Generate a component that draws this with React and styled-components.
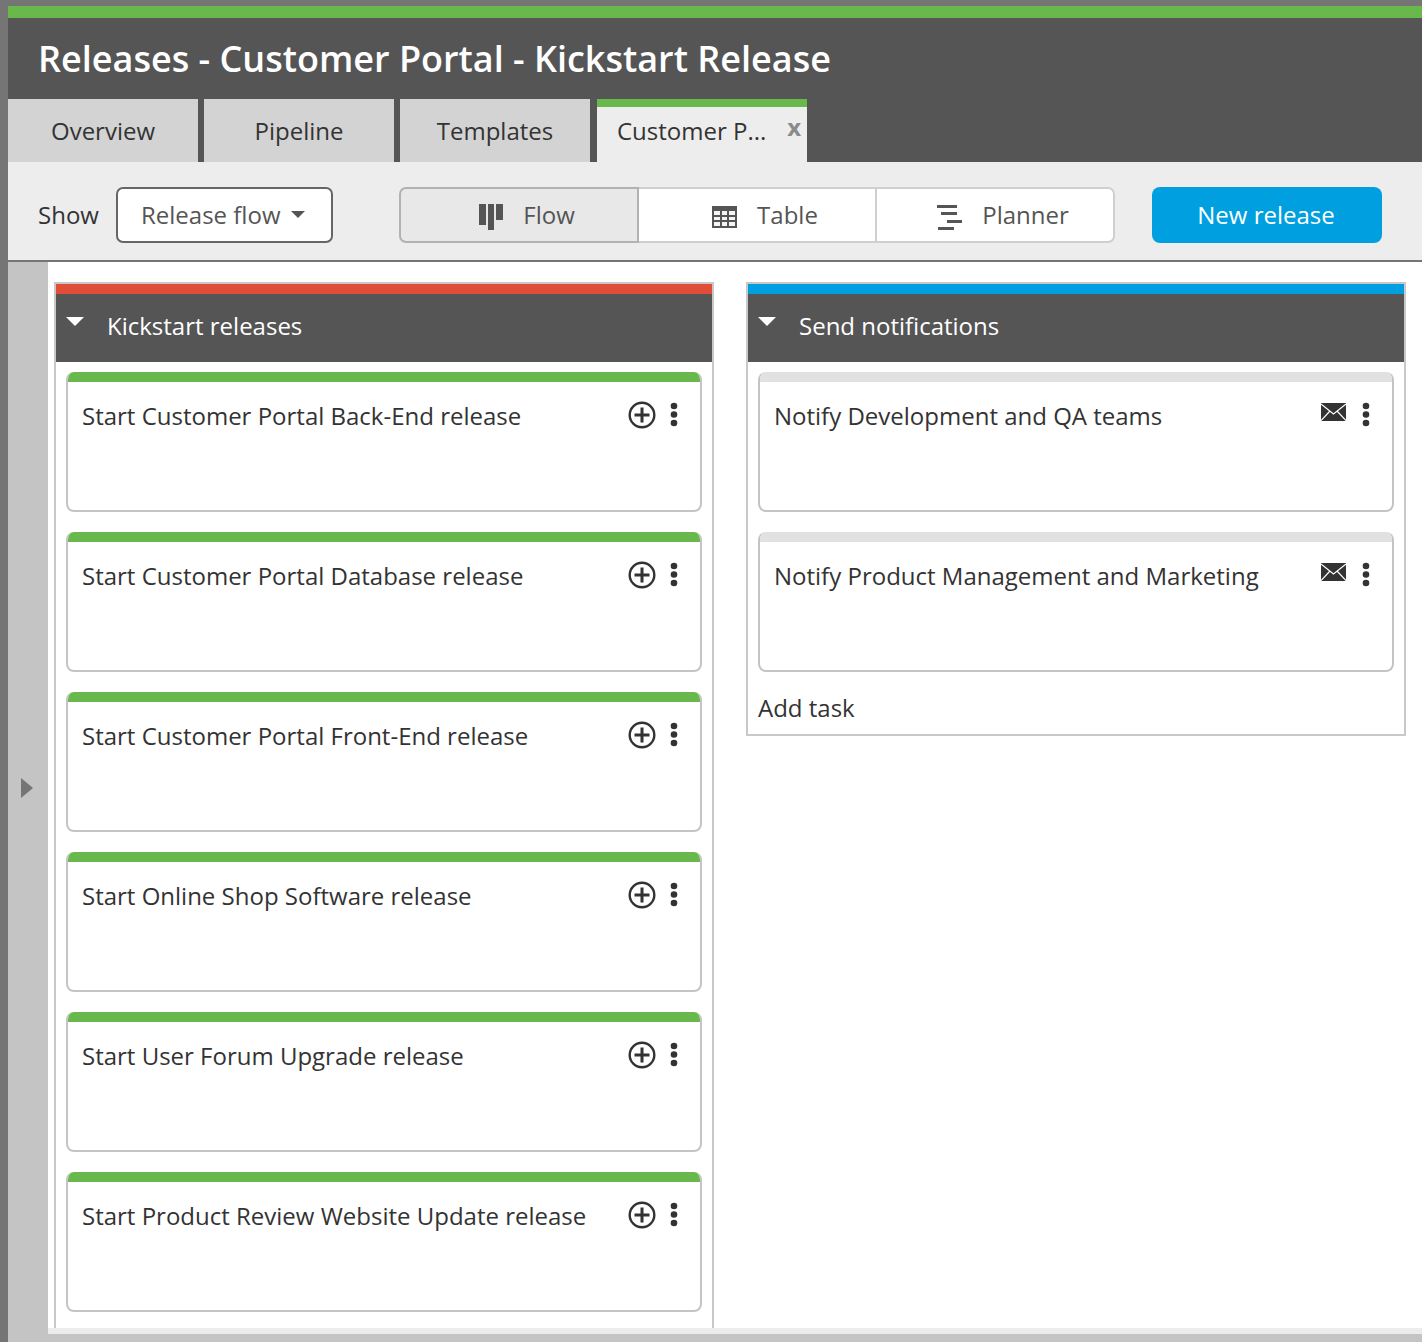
import React from "react";
import styled, { createGlobalStyle } from "styled-components";

const GlobalStyle = createGlobalStyle`
    html, body {
        margin: 0;
        height: 100%;
        overflow: hidden;
        background: #757575;
    }
    * {
        box-sizing: border-box;
    }
`

const Frame = styled.div`
    height: 1342px;
    padding: 6px 0 0 8px;
    display: flex;
    flex-direction: column;
    font-family: "Open Sans", "Liberation Sans", sans-serif;
    font-size: 24px;
    color: #333;
`

const Header = styled.header`
    flex: none;
    height: 156px;
    border-top: 12px solid #69b84b;
    background: #555;
    display: flex;
    flex-direction: column;
    justify-content: space-between;
`

const Title = styled.h1`
    margin: 0;
    padding: 15px 0 0 30px;
    font-size: 36px;
    line-height: 52px;
    font-weight: 600;
    color: #fff;
    white-space: nowrap;
`

const Tabs = styled.nav`
    display: flex;
    gap: 6px;
`

const Tab = styled.div`
    width: ${props => props.$active ? "210px" : "190px"};
    height: 63px;
    margin-left: ${props => props.$active ? "1px" : "0"};
    padding: ${props => props.$active ? "0 0 0 20px" : "0"};
    border-top: ${props => props.$active ? "8px solid #69b84b" : "0"};
    background: ${props => props.$active ? "#ededed" : "#d3d3d3"};
    display: flex;
    align-items: center;
    justify-content: ${props => props.$active ? "flex-start" : "center"};
    position: relative;
    line-height: 1;
`

const TabLabel = styled.span`
    position: relative;
    top: ${props => props.$active ? "-4px" : "0"};
`

const CloseTab = styled.span`
    position: absolute;
    top: 8px;
    right: 6px;
    font-size: 24px;
    font-weight: 700;
    color: #8a8a8a;
`

const Toolbar = styled.div`
    flex: none;
    height: 100px;
    padding: 25px 40px 0 30px;
    background: #ededed;
    border-bottom: 2px solid #757575;
    display: flex;
    align-items: flex-start;
`

const ShowLabel = styled.span`
    flex: none;
    width: 62px;
    line-height: 56px;
    margin-right: 16px;
`

const Select = styled.div`
    flex: none;
    width: 217px;
    height: 56px;
    margin-right: 66px;
    padding: 0 0 2px 23px;
    border: 2px solid #666;
    border-radius: 7px;
    background: #fff;
    color: #555;
    display: flex;
    align-items: center;
    gap: 11px;
`

const Caret = styled.span`
    width: 0;
    height: 0;
    border-left: 7px solid transparent;
    border-right: 7px solid transparent;
    border-top: 7px solid #555;
`

const Segments = styled.div`
    flex: none;
    width: 716px;
    height: 56px;
    margin-right: 37px;
    display: flex;
`

const Segment = styled.div`
    flex: 1;
    padding: 0 0 2px 16px;
    border: 2px solid ${props => props.$active ? "#b2b2b2" : "#cfcfcf"};
    border-left-width: ${props => props.$first || props.$active ? "2px" : "0"};
    border-radius: ${props => props.$first ? "7px 0 0 7px" : props.$last ? "0 7px 7px 0" : "0"};
    background: ${props => props.$active ? "#e8e8e8" : "#fff"};
    color: #555;
    display: flex;
    align-items: center;
    justify-content: center;
    gap: 20px;
    svg {
        margin-top: 6px;
    }
`

const NewButton = styled.button`
    flex: none;
    width: 230px;
    height: 56px;
    padding: 0 2px 2px 0;
    border: 0;
    border-radius: 8px;
    background: #009fdf;
    color: #fff;
    font: inherit;
`

const Body = styled.div`
    flex: 1;
    min-height: 0;
    display: flex;
`

const Sidebar = styled.aside`
    flex: none;
    width: 40px;
    background: #c4c4c4;
    display: flex;
    align-items: center;
    padding: 0 0 28px 13px;
`

const SideArrow = styled.span`
    width: 0;
    height: 0;
    border-top: 10px solid transparent;
    border-bottom: 10px solid transparent;
    border-left: 12px solid #757575;
`

const Board = styled.main`
    flex: 1;
    min-width: 0;
    padding-bottom: 8px;
    background: #c4c4c4;
`

const Canvas = styled.div`
    height: 100%;
    padding: 20px 16px 0 6px;
    background: #fff;
    border-bottom: 6px solid #ececec;
    display: flex;
    align-items: flex-start;
    gap: 32px;
    overflow: hidden;
`

const Column = styled.section`
    flex: none;
    width: 660px;
    border: 2px solid #c8c8c8;
    padding-bottom: ${props => props.$pad || "0"};
`

const ColumnHead = styled.div`
    height: 78px;
    padding: 0 0 6px 51px;
    border-top: 10px solid ${props => props.$color};
    background: #555;
    color: #fff;
    display: flex;
    align-items: center;
    position: relative;
`

const HeadCaret = styled.span`
    position: absolute;
    left: 10px;
    top: 23px;
    width: 0;
    height: 0;
    border-left: 9px solid transparent;
    border-right: 9px solid transparent;
    border-top: 9px solid #fff;
`

const CardList = styled.div`
    padding: 10px 10px 0;
    display: flex;
    flex-direction: column;
    gap: 20px;
`

const Card = styled.article`
    height: 140px;
    border: 2px solid #c4c4c4;
    border-top: 0;
    border-radius: 8px;
    overflow: hidden;
`

const CardStripe = styled.div`
    height: 10px;
    margin: 0 -2px;
    background: ${props => props.$color};
`

const CardRow = styled.div`
    padding: 17px 14px 0;
    display: flex;
    align-items: flex-start;
    justify-content: space-between;
    line-height: 33px;
`

const CardActions = styled.div`
    min-height: 28px;
    display: flex;
    align-items: center;
    gap: ${props => props.$gap};
    margin: 2px 8px 0 0;
`

const Dots = styled.svg`
    display: block;
    margin-top: -2px;
`

const Mail = styled.svg`
    display: block;
    margin-bottom: 6px;
`

const AddTask = styled.div`
    padding: 19px 10px 10px;
    line-height: 33px;
`

const FlowIcon = () => (
    <svg width="24" height="26" viewBox="0 0 24 26" fill="#555">
        <rect x="0" y="0" width="7" height="21" />
        <rect x="9" y="0" width="6" height="26" />
        <rect x="17" y="0" width="7" height="16" />
    </svg>
)

const TableIcon = () => (
    <svg width="25" height="22" viewBox="0 0 25 22" fill="none" stroke="#555">
        <rect x="0" y="0" width="25" height="22" fill="#555" stroke="none" />
        <path d="M2 5h21v15H2z" fill="#f4f4f4" stroke="none" />
        <path d="M2 10h21M2 15h21M9 5v15M16 5v15" strokeWidth="2" />
    </svg>
)

const PlannerIcon = () => (
    <svg width="25" height="26" viewBox="0 0 25 26" fill="#555">
        <rect x="0" y="1" width="20" height="3" />
        <rect x="4" y="8" width="16" height="3" />
        <rect x="10" y="16" width="15" height="3" />
        <rect x="1" y="23" width="16" height="3" />
    </svg>
)

const PlusIcon = () => (
    <svg width="28" height="28" viewBox="0 0 28 28" fill="none" stroke="#333" strokeWidth="2.4">
        <circle cx="14" cy="14" r="12.3" />
        <path d="M14 6.5v15M6.5 14h15" strokeWidth="3" />
    </svg>
)

const MailIcon = () => (
    <Mail width="25" height="18" viewBox="0 0 25 18">
        <rect width="25" height="18" fill="#333" />
        <path d="M0 1l12.5 10L25 1M0 17.5l9-9.5M25 17.5l-9-9.5" fill="none" stroke="#fff" strokeWidth="1.2" />
    </Mail>
)

const MoreIcon = () => (
    <Dots width="8" height="25" viewBox="0 0 8 25" fill="#333">
        <circle cx="4" cy="4" r="3.3" />
        <circle cx="4" cy="12.5" r="3.3" />
        <circle cx="4" cy="21" r="3.3" />
    </Dots>
)

const releases = [
    "Start Customer Portal Back-End release",
    "Start Customer Portal Database release",
    "Start Customer Portal Front-End release",
    "Start Online Shop Software release",
    "Start User Forum Upgrade release",
    "Start Product Review Website Update release",
];

const notifications = [
    "Notify Development and QA teams",
    "Notify Product Management and Marketing",
];

const App = () => {
    return (
        <Frame>
            <GlobalStyle />
            <Header>
                <Title>Releases - Customer Portal - Kickstart Release</Title>
                <Tabs>
                    <Tab><TabLabel>Overview</TabLabel></Tab>
                    <Tab><TabLabel>Pipeline</TabLabel></Tab>
                    <Tab><TabLabel>Templates</TabLabel></Tab>
                    <Tab $active>
                        <TabLabel $active>Customer P...</TabLabel>
                        <CloseTab>x</CloseTab>
                    </Tab>
                </Tabs>
            </Header>
            <Toolbar>
                <ShowLabel>Show</ShowLabel>
                <Select>Release flow <Caret /></Select>
                <Segments>
                    <Segment $first $active><FlowIcon />Flow</Segment>
                    <Segment><TableIcon />Table</Segment>
                    <Segment $last><PlannerIcon />Planner</Segment>
                </Segments>
                <NewButton>New release</NewButton>
            </Toolbar>
            <Body>
                <Sidebar><SideArrow /></Sidebar>
                <Board>
                    <Canvas>
                        <Column $pad="40px">
                            <ColumnHead $color="#e04e39"><HeadCaret />Kickstart releases</ColumnHead>
                            <CardList>
                                {releases.map(name => (
                                    <Card key={name}>
                                        <CardStripe $color="#69b84b" />
                                        <CardRow>
                                            {name}
                                            <CardActions $gap="14px">
                                                <PlusIcon />
                                                <MoreIcon />
                                            </CardActions>
                                        </CardRow>
                                    </Card>
                                ))}
                            </CardList>
                        </Column>
                        <Column>
                            <ColumnHead $color="#009fdf"><HeadCaret />Send notifications</ColumnHead>
                            <CardList>
                                {notifications.map(name => (
                                    <Card key={name}>
                                        <CardStripe $color="#e1e1e1" />
                                        <CardRow>
                                            {name}
                                            <CardActions $gap="16px">
                                                <MailIcon />
                                                <MoreIcon />
                                            </CardActions>
                                        </CardRow>
                                    </Card>
                                ))}
                            </CardList>
                            <AddTask>Add task</AddTask>
                        </Column>
                    </Canvas>
                </Board>
            </Body>
        </Frame>
    );
}

export default App;
